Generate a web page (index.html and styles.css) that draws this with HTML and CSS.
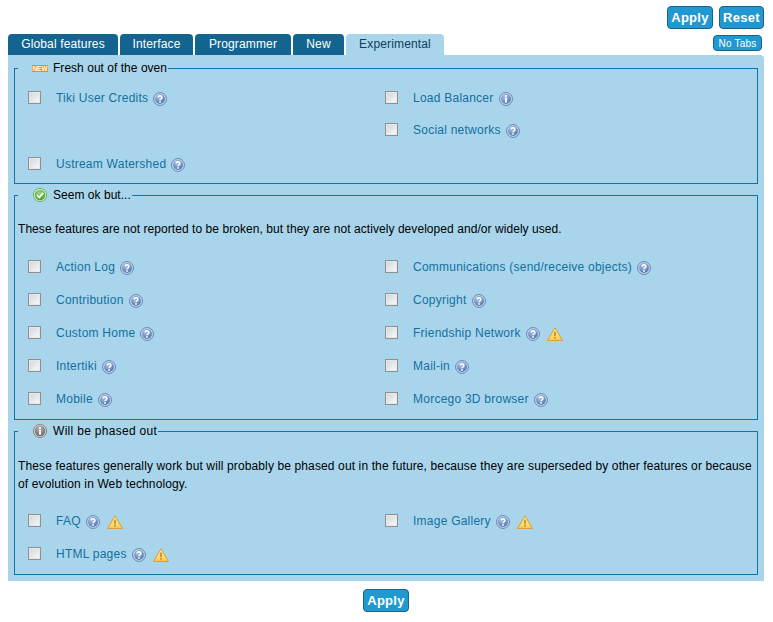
FILE: index.html
```html
<!DOCTYPE html>
<html lang="en">
<head>
<meta charset="utf-8">
<title>Experimental features</title>
<link rel="stylesheet" href="styles.css">
</head>
<body>
<svg class="defs" width="0" height="0" aria-hidden="true">
  <defs>
    <radialGradient id="blue" cx="40%" cy="30%" r="75%"><stop offset="0" stop-color="#a9c4e4"/><stop offset="1" stop-color="#4a74ab"/></radialGradient>
    <radialGradient id="grn" cx="45%" cy="30%" r="75%"><stop offset="0" stop-color="#9bd77d"/><stop offset="1" stop-color="#3f9a2e"/></radialGradient>
    <radialGradient id="gry" cx="45%" cy="30%" r="75%"><stop offset="0" stop-color="#b5b5b5"/><stop offset="1" stop-color="#646464"/></radialGradient>
    <linearGradient id="yel" x1="0" y1="0" x2="0" y2="1"><stop offset="0" stop-color="#fff2a8"/><stop offset="1" stop-color="#fbcf54"/></linearGradient>
    <symbol id="help" viewBox="0 0 14 14">
      <circle cx="7" cy="7" r="6.4" fill="#cfdcf0" stroke="#5d7fb8" stroke-width="1"/>
      <circle cx="7" cy="7" r="4.9" fill="url(#blue)"/>
      <path d="M5.1 5.4a1.9 1.7 0 1 1 2.9 1.5c-.7.4-1 .7-1 1.4" fill="none" stroke="#fff" stroke-width="1.5"/>
      <rect x="6.2" y="9.2" width="1.6" height="1.6" fill="#fff"/>
    </symbol>
    <symbol id="info" viewBox="0 0 14 14">
      <circle cx="7" cy="7" r="6.4" fill="#cfdcf0" stroke="#5d7fb8" stroke-width="1"/>
      <circle cx="7" cy="7" r="4.9" fill="url(#blue)"/>
      <rect x="6.1" y="3" width="1.8" height="1.8" fill="#fff"/>
      <rect x="6.1" y="5.7" width="1.8" height="5" fill="#fff"/>
    </symbol>
    <symbol id="warn" viewBox="0 0 16 14">
      <path d="M8 .8 15.4 13.4H.6Z" fill="url(#yel)" stroke="#df9a2c" stroke-width="1" stroke-linejoin="round"/>
      <rect x="7.2" y="4.6" width="1.6" height="4.6" fill="#b8862a"/>
      <rect x="7.2" y="10" width="1.6" height="1.6" fill="#b8862a"/>
    </symbol>
  </defs>
</svg>
<div class="page">
  <div class="actions">
    <button class="btn" type="button">Apply</button>
    <button class="btn" type="button">Reset</button>
  </div>
  <div class="tabbar">
    <span class="tab">Global features</span>
    <span class="tab tab-interface">Interface</span>
    <span class="tab tab-programmer">Programmer</span>
    <span class="tab tab-new">New</span>
    <span class="tab tab-active">Experimental</span>
    <button class="btn btn-small" type="button">No Tabs</button>
  </div>
  <div class="panel">
    <fieldset class="group group-fresh">
      <legend class="legend">
        <svg class="legend-new" viewBox="0 0 16 7" width="16" height="7"><rect width="16" height="7" fill="#f08c10"/><text x="8" y="6" class="new-text" text-anchor="middle">NEW</text></svg><span class="legend-text">Fresh out of the oven</span>
      </legend>
      <div class="grid grid-fresh">
        <div class="item"><input class="check" type="checkbox"><a class="name">Tiki User Credits</a><svg class="ico"><use href="#help"/></svg></div>
        <div class="item"><input class="check" type="checkbox"><a class="name">Load Balancer</a><svg class="ico"><use href="#info"/></svg></div>
        <div class="item"></div>
        <div class="item"><input class="check" type="checkbox"><a class="name">Social networks</a><svg class="ico"><use href="#help"/></svg></div>
        <div class="item"><input class="check" type="checkbox"><a class="name">Ustream Watershed</a><svg class="ico"><use href="#help"/></svg></div>
      </div>
    </fieldset>
    <fieldset class="group">
      <legend class="legend">
        <svg class="legend-ico" viewBox="0 0 14 14"><circle cx="7" cy="7" r="6.6" fill="#d8efc8" stroke="#58a43f" stroke-width=".8"/><circle cx="7" cy="7" r="5.2" fill="url(#grn)"/><path d="M3.9 7.2 6.2 9.5 10.2 4.9" fill="none" stroke="#fff" stroke-width="1.8"/></svg><span class="legend-text">Seem ok but...</span>
      </legend>
      <p class="desc">These features are not reported to be broken, but they are not actively developed and/or widely used.</p>
      <div class="grid grid-ok">
        <div class="item"><input class="check" type="checkbox"><a class="name">Action Log</a><svg class="ico"><use href="#help"/></svg></div>
        <div class="item"><input class="check" type="checkbox"><a class="name">Communications (send/receive objects)</a><svg class="ico"><use href="#help"/></svg></div>
        <div class="item"><input class="check" type="checkbox"><a class="name">Contribution</a><svg class="ico"><use href="#help"/></svg></div>
        <div class="item"><input class="check" type="checkbox"><a class="name">Copyright</a><svg class="ico"><use href="#help"/></svg></div>
        <div class="item"><input class="check" type="checkbox"><a class="name">Custom Home</a><svg class="ico"><use href="#help"/></svg></div>
        <div class="item"><input class="check" type="checkbox"><a class="name">Friendship Network</a><svg class="ico"><use href="#help"/></svg><svg class="warn"><use href="#warn"/></svg></div>
        <div class="item"><input class="check" type="checkbox"><a class="name">Intertiki</a><svg class="ico"><use href="#help"/></svg></div>
        <div class="item"><input class="check" type="checkbox"><a class="name">Mail-in</a><svg class="ico"><use href="#help"/></svg></div>
        <div class="item"><input class="check" type="checkbox"><a class="name">Mobile</a><svg class="ico"><use href="#help"/></svg></div>
        <div class="item"><input class="check" type="checkbox"><a class="name">Morcego 3D browser</a><svg class="ico"><use href="#help"/></svg></div>
      </div>
    </fieldset>
    <fieldset class="group">
      <legend class="legend legend-wide">
        <svg class="legend-ico" viewBox="0 0 14 14"><circle cx="7" cy="7" r="6.6" fill="#d0d0d0" stroke="#777" stroke-width=".8"/><circle cx="7" cy="7" r="5.2" fill="url(#gry)"/><rect x="6.1" y="3" width="1.8" height="1.8" fill="#fff"/><rect x="6.1" y="5.7" width="1.8" height="5" fill="#fff"/></svg><span class="legend-text">Will be phased out</span>
      </legend>
      <p class="desc desc-long">These features generally work but will probably be phased out in the future, because they are superseded by other features or because of evolution in Web technology.</p>
      <div class="grid">
        <div class="item"><input class="check" type="checkbox"><a class="name">FAQ</a><svg class="ico"><use href="#help"/></svg><svg class="warn"><use href="#warn"/></svg></div>
        <div class="item"><input class="check" type="checkbox"><a class="name">Image Gallery</a><svg class="ico"><use href="#help"/></svg><svg class="warn"><use href="#warn"/></svg></div>
        <div class="item"><input class="check" type="checkbox"><a class="name">HTML pages</a><svg class="ico"><use href="#help"/></svg><svg class="warn"><use href="#warn"/></svg></div>
      </div>
    </fieldset>
  </div>
  <div class="footer"><button class="btn" type="button">Apply</button></div>
</div>
</body>
</html>
```

FILE: styles.css
```css
* { box-sizing: border-box; }
html, body { margin: 0; padding: 0; background: #fff; }
body { font-family: "Liberation Sans", Arial, sans-serif; font-size: 12px; color: #000; }
.defs { position: absolute; }
.page { padding: 6px 9px 0 8px; width: 773px; }
.actions { display: flex; justify-content: flex-end; gap: 6px; }
.btn {
  height: 23px; width: 46px; padding: 0; border: 1px solid #13658f; border-radius: 4px;
  background: #2199d0; color: #fff; font: bold 13px "Liberation Sans", Arial, sans-serif; letter-spacing: .3px;
}
.btn + .btn { width: 45px; }
.btn-small {
  height: 16px; width: 49px; margin-left: auto; margin-right: 2px; align-self: flex-start; margin-top: 1px;
  font-weight: normal; font-size: 10px; letter-spacing: .2px;
}
.tabbar { display: flex; gap: 2px; margin-top: 5px; height: 21px; align-items: flex-end; }
.tab {
  height: 21px; line-height: 21px; width: 110px; text-align: center; background: #13658f; color: #fff;
  border-radius: 4px 4px 0 0; letter-spacing: .15px;
}
.tab-interface { width: 73px; }
.tab-programmer { width: 96px; }
.tab-new { width: 51px; }
.tab-active { width: 98px; background: #a8d5eb; color: #0e3f59; }
.panel { background: #a8d5eb; padding: 6px 6px 6px; border-radius: 0 4px 0 0; }
.group { margin: 0 0 4px; padding: 0 3px 3px; border: 1px solid #1273a6; min-width: 0; }
.group:last-child { margin-bottom: 0; }
.group-fresh { padding-bottom: 2px; }
.legend { margin-left: 0; padding: 0 1px; display: flex; align-items: center; height: 14px; letter-spacing: .03px; }
.legend-wide { letter-spacing: .3px; }
.legend-new { margin-left: 13px; margin-right: 5px; }
.legend-ico { width: 14px; height: 14px; margin-left: 14px; margin-right: 6px; }
.new-text { font: bold 6.5px "Liberation Sans", sans-serif; fill: #fff; letter-spacing: 0; }
.desc { margin: 18px 0 0; line-height: 18px; letter-spacing: .06px; }
.desc-long { margin-top: 19px; letter-spacing: .125px; }
.grid { display: grid; grid-template-columns: 357px 1fr; grid-auto-rows: 33px; padding-top: 5px; }
.group .desc + .grid { padding-top: 12px; }
.group .desc + .grid-ok { padding-top: 13px; }
.grid-fresh { grid-template-rows: 32px 34px 33px; padding-top: 7px; }
.item { display: flex; align-items: center; padding-left: 10px; height: 33px; }
.check {
  appearance: none; width: 13px; height: 13px; margin: 0 15px 0 0; flex: none; border: 1px solid #909090;
  background: linear-gradient(135deg, #cfd5d9, #fbfbfb); box-shadow: inset 0 0 0 1px #e4e8ea;
  position: relative; top: -1px;
}
.name { color: #13709f; margin-left: 0; letter-spacing: .24px; position: relative; top: -1px; }
.ico { width: 14px; height: 14px; margin-left: 5px; flex: none; }
.warn { width: 16px; height: 14px; margin-left: 7px; flex: none; }
.footer { display: flex; justify-content: center; padding-top: 8px; }
```
